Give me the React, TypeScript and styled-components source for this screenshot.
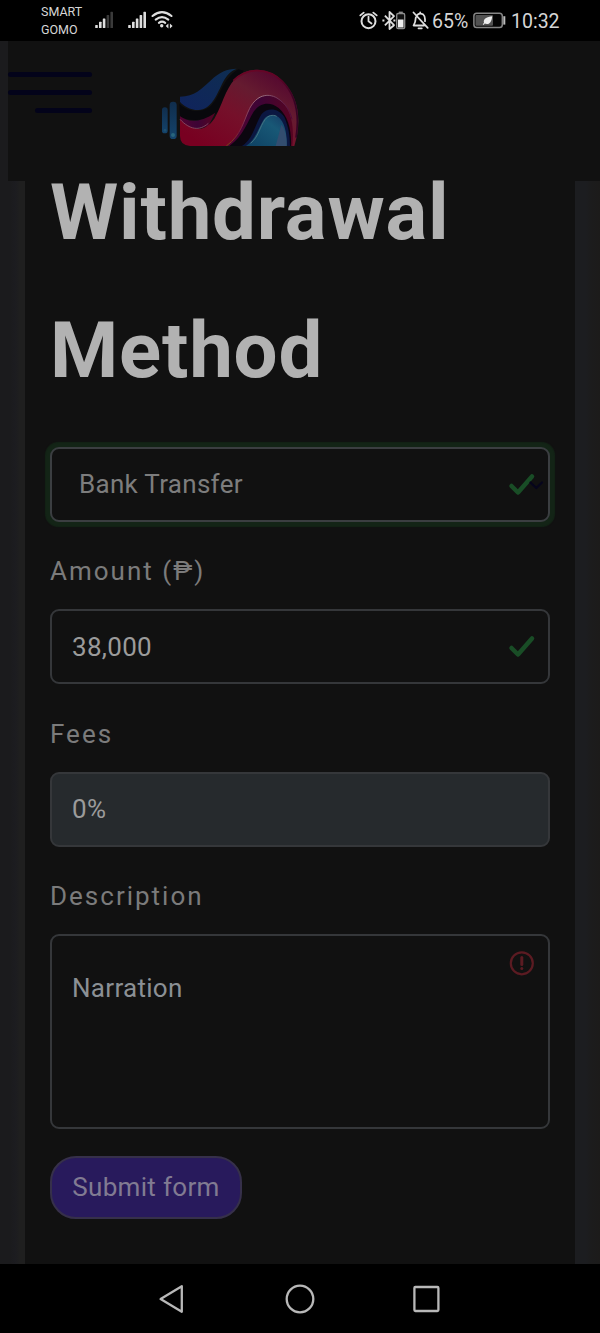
import React from 'react';
import styled, { createGlobalStyle } from 'styled-components';

const GlobalStyle = createGlobalStyle`
  * { box-sizing: border-box; }
  html, body { margin: 0; padding: 0; background: #000; }
  body { font-family: Roboto, "Liberation Sans", sans-serif; }
`;

const Screen = styled.div`
  width: 600px;
  height: 1333px;
  display: flex;
  flex-direction: column;
  overflow: hidden;
  background: #000;
`;

const StatusBar = styled.div`
  height: 41px;
  flex: none;
  display: flex;
  align-items: flex-start;
  padding-left: 41px;
  color: #d6d6d6;
`;

const Carriers = styled.div`
  width: 54px;
  padding-top: 3px;
  font-size: 12.5px;
  line-height: 18px;
`;

const StatusIcon = styled.svg<{ $gap?: number }>`
  display: block;
  flex: none;
  margin-left: ${(p) => p.$gap ?? 0}px;
`;

const StatusText = styled.span<{ $width: number; $gap: number }>`
  width: ${(p) => p.$width}px;
  margin-left: ${(p) => p.$gap}px;
  font-size: 19.5px;
  line-height: 43px;
  white-space: nowrap;
`;

const Page = styled.main`
  flex: 1;
  min-height: 0;
  display: flex;
  flex-direction: column;
  background: linear-gradient(
    90deg,
    #1b1b1d 0, #1b1b1d 10px, #1c1c20 15px, #1f1f1f 20px, #1f1f1f 25px,
    #1c1d20 575px, #1c1d20 586px, #1c1c1d 590px, #1c1b1a 600px
  );
`;

const Header = styled.header`
  height: 140px;
  flex: none;
  margin-left: 8px;
  display: flex;
  background: #111;
`;

const MenuButton = styled.button`
  width: 84px;
  padding: 31px 0 0;
  border: 0;
  background: none;
  display: flex;
  flex-direction: column;
  align-items: flex-end;
  gap: 13px;
`;

const MenuLine = styled.span<{ $width: number }>`
  width: ${(p) => p.$width}px;
  height: 5px;
  border-radius: 3px;
  background: #03031a;
`;

const Logo = styled.svg`
  display: block;
  width: 170px;
  height: 100px;
  margin: 15px 0 0 58px;
`;

const Card = styled.section`
  flex: 1;
  display: flow-root;
  margin: 0 25px;
  padding: 0 25px;
  background: #111;
`;

const Title = styled.h1`
  margin: -37px 0 27.2px;
  font-size: 78px;
  font-weight: 700;
  line-height: 137.7px;
  letter-spacing: 0.78px;
  color: #b2b2b2;
`;

const Label = styled.label`
  display: block;
  height: 88px;
  padding-top: 6px;
  font-size: 26px;
  line-height: 88px;
  letter-spacing: 2px;
  color: #7b7b7b;
`;

const Control = styled.div<{ $focus?: boolean; $disabled?: boolean; $tall?: boolean; $last?: boolean }>`
  height: ${(p) => (p.$tall ? 195 : 75)}px;
  margin-bottom: ${(p) => (p.$last ? 26.5 : -0.5)}px;
  display: flex;
  align-items: ${(p) => (p.$tall ? 'flex-start' : 'center')};
  justify-content: space-between;
  padding: ${(p) => (p.$tall ? '14px 13px 0 20px' : p.$focus ? '0 4px 0 27px' : '0 13px 0 20px')};
  border: 2px solid ${(p) => (p.$focus ? '#3b3e41' : '#35373a')};
  border-radius: 9px;
  background: ${(p) => (p.$disabled ? '#262a2d' : '#111')};
  box-shadow: ${(p) => (p.$focus ? '0 0 1px 4.5px #132416' : 'none')};
  font-size: 26px;
  letter-spacing: 0.3px;
  color: ${(p) => (p.$tall ? '#8b9095' : p.$focus ? '#7d7d7d' : '#9b9b9b')};
`;

const Value = styled.span<{ $offset?: number }>`
  padding-top: ${(p) => p.$offset ?? 0}px;
  line-height: 30px;
`;

const SubmitButton = styled.button`
  display: block;
  width: 192px;
  height: 63px;
  padding: 0;
  border: 2px solid #36304a;
  border-radius: 26px;
  background: #281a5c;
  color: #817b92;
  font-family: inherit;
  font-size: 26px;
  letter-spacing: 0.32px;
`;

const NavBar = styled.nav`
  height: 69px;
  flex: none;
  display: flex;
  justify-content: center;
  align-items: center;
  gap: 92px;
`;

const NavIcon = styled.svg`
  display: block;
  width: 34px;
  height: 34px;
  fill: none;
  stroke: #b8b8b8;
  stroke-width: 2.3;
  stroke-linejoin: round;
`;

function Signal({ weak, gap }: { weak?: boolean; gap?: number }) {
  return (
    <StatusIcon width="20" height="41" viewBox="0 0 20 41" $gap={gap}>
      {[0, 1, 2, 3, 4].map((i) => (
        <rect key={i} x={0.2 + i * 3.8} y={25 - i * 3.3} width="2.6" height={3 + i * 3.3} rx="0.6"
          fill={weak && i > 2 ? '#3a3a3a' : '#dedede'} />
      ))}
    </StatusIcon>
  );
}

function Wifi() {
  return (
    <StatusIcon width="24" height="41" viewBox="0 0 24 41" $gap={3} fill="none" stroke="#dedede" strokeWidth="2.1" strokeLinecap="round">
      <path d="M1.5 16Q11 8.2 20.5 16M4.7 19.6Q11 14.6 17.3 19.6M7.9 22.8Q11 20.4 14.2 22.8" />
      <circle cx="10.7" cy="25.8" r="1.7" fill="#dedede" stroke="none" />
      <path d="M17.4 23.4 14.7 26 17.4 28.6ZM18.9 23.4 21.6 26 18.9 28.6Z" fill="#dedede" stroke="none" />
    </StatusIcon>
  );
}

function Alarm() {
  return (
    <StatusIcon width="20" height="41" viewBox="0 0 20 41" $gap={184} fill="none" stroke="#dedede" strokeWidth="2" strokeLinecap="round" strokeLinejoin="round">
      <circle cx="9.5" cy="21.2" r="7" />
      <path d="M9.5 16.7V21.3L12.5 23.5M1.3 15.4 4.7 12.6M17.7 15.4 14.3 12.6" strokeWidth="1.8" />
    </StatusIcon>
  );
}

function Bluetooth() {
  return (
    <StatusIcon width="26" height="41" viewBox="0 0 26 41" $gap={3}>
      <path d="M2.9 15.6 12 25.2 7.5 29V12L12 16.1 2.9 25.3" fill="none" stroke="#dedede" strokeWidth="1.8" strokeLinejoin="round" />
      <path d="M0.4 20.5h2M11.4 20.5h2" stroke="#dedede" strokeWidth="1.8" />
      <rect x="14.7" y="13.5" width="8" height="15.2" rx="1.4" fill="#111" stroke="#8d8d8d" strokeWidth="1.3" />
      <rect x="16.8" y="11.6" width="4" height="1.6" fill="#8d8d8d" />
      <rect x="16" y="19.5" width="5.5" height="8" fill="#ededed" />
    </StatusIcon>
  );
}

function Muted() {
  return (
    <StatusIcon width="18" height="41" viewBox="0 0 18 41" $gap={4} fill="none" stroke="#dedede" strokeWidth="1.8" strokeLinecap="round" strokeLinejoin="round">
      <path d="M5.5 14.8Q8 12.6 11.3 14.6Q13 16 13 19.2V21.2M3.8 17.5Q3.5 22.6 1.6 25.5H12M1.5 12.5 15.7 27.8M6.5 28.3H9.8" />
      <path d="M8.2 13V12.4" />
    </StatusIcon>
  );
}

function Battery() {
  return (
    <StatusIcon width="34" height="41" viewBox="0 0 34 41" $gap={4}>
      <rect x="0.9" y="13.2" width="28.4" height="14.3" rx="2.8" fill="#050505" stroke="#858585" strokeWidth="1.5" />
      <rect x="2.5" y="15" width="17.5" height="10.8" rx="1" fill="#525252" />
      <path d="M31.3 16.2V24.6" stroke="#bcbcbc" strokeWidth="2" />
      <path d="M19.2 16.2C18.7 22.8 15.4 25.2 11.8 23.6L10.5 25L9.8 24.2L11 22.8C9.8 18.6 14.1 16.8 19.2 16.2Z" fill="#eee" />
    </StatusIcon>
  );
}

function BrandMark() {
  return (
    <Logo viewBox="0 0 510 300">
      <defs>
        <linearGradient id="ribbon" x1="0.1" y1="0.9" x2="0.9" y2="0.1">
          <stop offset="0" stopColor="#780021" />
          <stop offset="0.42" stopColor="#75102a" />
          <stop offset="0.7" stopColor="#651b30" />
          <stop offset="1" stopColor="#53062f" />
        </linearGradient>
        <linearGradient id="rim" x1="0" y1="0" x2="1" y2="0.4">
          <stop offset="0" stopColor="#6b0625" />
          <stop offset="0.6" stopColor="#620426" />
          <stop offset="1" stopColor="#350324" />
        </linearGradient>
        <linearGradient id="edge" x1="0" y1="0" x2="1" y2="0">
          <stop offset="0" stopColor="#7a500c" />
          <stop offset="0.2" stopColor="#7a2040" />
          <stop offset="0.5" stopColor="#9c7484" />
          <stop offset="1" stopColor="#4f0638" />
        </linearGradient>
        <linearGradient id="purple" x1="0" y1="0" x2="1" y2="0">
          <stop offset="0" stopColor="#540332" />
          <stop offset="0.5" stopColor="#3d0435" />
          <stop offset="1" stopColor="#560421" />
        </linearGradient>
        <linearGradient id="wave" x1="0" y1="1" x2="1" y2="0">
          <stop offset="0" stopColor="#10235c" />
          <stop offset="1" stopColor="#0e2e51" />
        </linearGradient>
        <linearGradient id="drop" x1="0" y1="1" x2="1" y2="0">
          <stop offset="0" stopColor="#0e4163" />
          <stop offset="0.65" stopColor="#185876" />
          <stop offset="1" stopColor="#163964" />
        </linearGradient>
        <linearGradient id="pill" x1="0" y1="0" x2="0" y2="1">
          <stop offset="0" stopColor="#102d4c" />
          <stop offset="1" stopColor="#14436b" />
        </linearGradient>
        <clipPath id="base"><rect width="510" height="270" /></clipPath>
      </defs>
      <rect x="36" y="154" width="17" height="78" rx="8" fill="url(#pill)" />
      <rect x="59" y="137" width="21" height="112" rx="10" fill="url(#pill)" />
      <circle cx="69" cy="237" r="6" fill="#28647c" />
      <circle cx="45" cy="223" r="4" fill="#1d5070" />
      <g clipPath="url(#base)">
        <path d="M90 122C135 122 153 100 183 73C207 49 232 38 260 38C237 46 225 66 215 86C198 121 183 160 145 162C120 162 98 148 90 137Z" fill="url(#wave)" />
        <path d="M88 143C115 169 153 171 178 154C212 126 214 70 265 40L282 44C240 90 225 160 188 180C143 200 108 192 90 181Z" fill="#08080c" />
        <path d="M90 181C114 199 149 202 196 170L175 210C132 225 106 212 90 196Z" fill="url(#purple)" />
        <path d="M90 190C129 229 166 227 193 188C216 150 226 99 255 69C291 31 354 32 397 74C442 118 452 177 441 239L433 270H120Q90 268 90 240Z" fill="url(#ribbon)" />
        <path d="M250 74C291 33 354 34 397 76C438 118 449 177 438 245" fill="none" stroke="url(#rim)" strokeWidth="5" />
        <path d="M229 270C275 236 280 195 299 157C320 117 358 110 387 130C422 155 434 205 427 270Z" fill="url(#purple)" />
        <path d="M238 270C283 236 291 198 311 167C333 137 362 138 386 156C414 180 425 222 423 270Z" fill="#0b060f" />
        <path d="M229 270C275 236 280 195 299 157C320 117 353 110 381 126C408 143 420 164 426 190" fill="none" stroke="url(#edge)" strokeWidth="3" />
        <path d="M90 190C119 221 148 226 175 202" fill="none" stroke="#85506a" strokeWidth="2.5" />
        <path d="M276 270C308 251 315 206 335 174C354 153 386 157 403 183C416 213 420 241 420 270Z" fill="#0b1741" />
        <path d="M288 270C318 249 326 215 341 191C350 176 370 172 386 184C403 199 411 228 410 270Z" fill="url(#drop)" />
        <path d="M302 262C326 242 328 215 345 191C355 178 368 175 380 181" fill="none" stroke="#45707f" strokeWidth="3" />
        <path d="M394 206L377 270H410C411 244 405 218 394 206Z" fill="#334d6f" />
      </g>
    </Logo>
  );
}

const TrailingIcon = styled.svg<{ $top?: number }>`
  display: block;
  flex: none;
  overflow: visible;
  margin-top: ${(p) => p.$top ?? 0}px;
`;

const tick = 'M2.5 14 9 20.5 23 4.5';

function Tick() {
  return (
    <TrailingIcon width="26" height="26" viewBox="0 0 26 26" $top={1}>
      <path d={tick} fill="none" stroke="#194d26" strokeWidth="4.5" strokeLinecap="round" strokeLinejoin="round" />
    </TrailingIcon>
  );
}

function TickWithChevron() {
  return (
    <TrailingIcon width="35" height="26" viewBox="0 0 35 26" $top={1}>
      <path d={tick} fill="none" stroke="#194d26" strokeWidth="4.5" strokeLinecap="round" strokeLinejoin="round" />
      <path d="M21.5 10.5 27.3 16 33 10.5" fill="none" stroke="#06051c" strokeWidth="2.3" strokeLinecap="round" strokeLinejoin="round" />
    </TrailingIcon>
  );
}

function Alert() {
  return (
    <TrailingIcon width="26" height="26" viewBox="0 0 26 26" fill="none" stroke="#5b1b22">
      <circle cx="12.8" cy="13.3" r="11" strokeWidth="2.2" />
      <path d="M12.8 7.5V14.5" strokeWidth="3" strokeLinecap="round" />
      <circle cx="12.8" cy="18.5" r="1.5" fill="#5b1b22" stroke="none" />
    </TrailingIcon>
  );
}

export default function App() {
  return (
    <>
      <GlobalStyle />
      <Screen>
        <StatusBar>
          <Carriers>SMART<br />GOMO</Carriers>
          <Signal weak />
          <Signal gap={13} />
          <Wifi />
          <Alarm />
          <Bluetooth />
          <Muted />
          <StatusText $width={37} $gap={2}>65%</StatusText>
          <Battery />
          <StatusText $width={50} $gap={4}>10:32</StatusText>
        </StatusBar>
        <Page>
          <Header>
            <MenuButton aria-label="Menu">
              <MenuLine $width={84} />
              <MenuLine $width={84} />
              <MenuLine $width={57} />
            </MenuButton>
            <BrandMark />
          </Header>
          <Card>
            <Title>Withdrawal Method</Title>
            <Control $focus><Value>Bank Transfer</Value><TickWithChevron /></Control>
            <Label>Amount (₱)</Label>
            <Control><Value>38,000</Value><Tick /></Control>
            <Label>Fees</Label>
            <Control $disabled><Value>0%</Value></Control>
            <Label>Description</Label>
            <Control $tall $last><Value $offset={23}>Narration</Value><Alert /></Control>
            <SubmitButton>Submit form</SubmitButton>
          </Card>
        </Page>
        <NavBar>
          <NavIcon viewBox="0 0 34 34"><path d="M3.6 17 24.8 4.2V29.8Z" /></NavIcon>
          <NavIcon viewBox="0 0 34 34"><circle cx="17" cy="17" r="13.3" /></NavIcon>
          <NavIcon viewBox="0 0 34 34"><rect x="5.4" y="5" width="24" height="24" rx="1" /></NavIcon>
        </NavBar>
      </Screen>
    </>
  );
}
